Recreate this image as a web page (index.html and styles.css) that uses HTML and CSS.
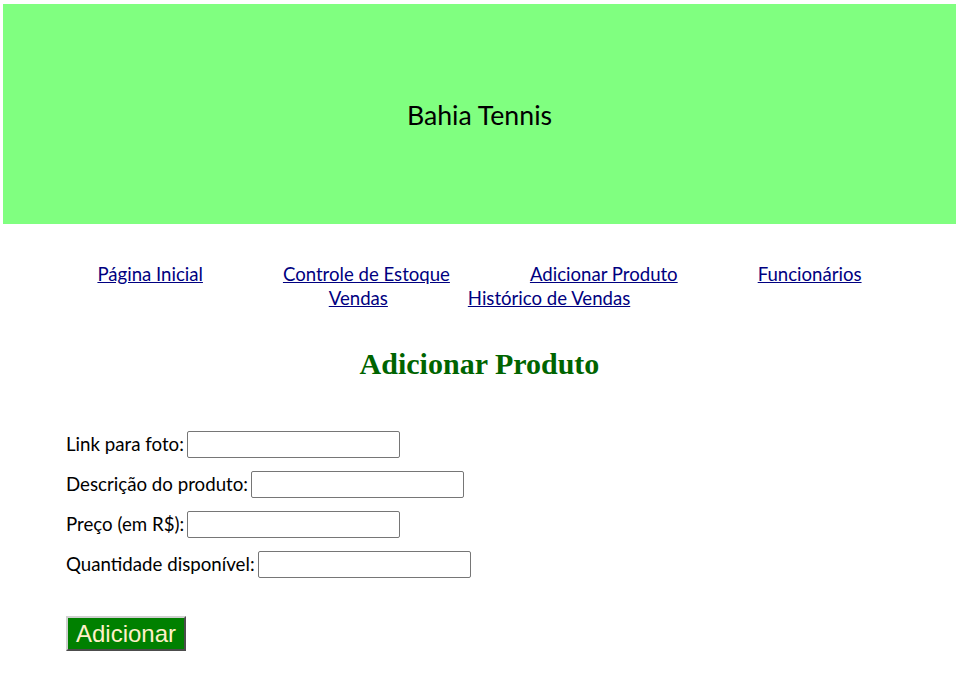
FILE: index.html
```html
<!DOCTYPE html>
<html lang="pt-BR">
<head>
<meta charset="utf-8">
<title>Bahia Tennis - Adicionar Produto</title>
<link rel="stylesheet" href="styles.css">
</head>
<body>
<header class="banner">
  <span class="brand">Bahia Tennis</span>
</header>
<nav class="menu">
  <div class="menu-row">
    <a href="#">Página Inicial</a>
    <a href="#">Controle de Estoque</a>
    <a href="#">Adicionar Produto</a>
    <a href="#">Funcionários</a>
  </div>
  <div class="menu-row">
    <a href="#">Vendas</a>
    <a href="#">Histórico de Vendas</a>
  </div>
</nav>
<h1 class="page-title">Adicionar Produto</h1>
<form class="product-form">
  <div class="field"><label for="foto">Link para foto:</label><input id="foto" type="text"></div>
  <div class="field"><label for="desc">Descrição do produto:</label><input id="desc" type="text"></div>
  <div class="field"><label for="preco">Preço (em R$):</label><input id="preco" type="text"></div>
  <div class="field"><label for="qtd">Quantidade disponível:</label><input id="qtd" type="text"></div>
  <div class="actions"><button type="button" class="submit">Adicionar</button></div>
</form>
</body>
</html>
```
FILE: styles.css
```css
html, body {
  background: #ffffff;
}
body {
  margin: 0;
  padding: 4px 1px 0 3px;
  font-family: Lato, "Open Sans", sans-serif;
  color: #000000;
}
.banner {
  background: #80ff80;
  height: 220px;
  display: flex;
  align-items: center;
  justify-content: center;
}
.brand {
  font-size: 26.7px;
  line-height: 32px;
  padding-top: 1px;
}
.menu {
  margin-top: 38px;
  display: flex;
  flex-direction: column;
  align-items: center;
}
.menu-row {
  display: flex;
  justify-content: center;
  line-height: 24px;
  font-size: 18.6px;
}
.menu-row a {
  color: #000080;
  margin: 0 40px;
}
.page-title {
  margin: 37px 0 0;
  text-align: center;
  font-family: "Liberation Serif", "Times New Roman", serif;
  font-weight: bold;
  font-size: 30px;
  line-height: 34px;
  color: #006400;
}
.product-form {
  margin: 50px 0 0;
  padding-left: 63px;
  display: flex;
  flex-direction: column;
  gap: 13px;
}
.field {
  display: flex;
  align-items: center;
  gap: 3px;
  height: 27px;
  font-size: 18.7px;
  line-height: 24px;
}
.field label {
  margin-top: -1px;
}
.field input {
  box-sizing: border-box;
  width: 213px;
  height: 27px;
  border: 1px solid #767676;
  border-radius: 2px;
  padding: 1px 2px;
  font-size: 16px;
  background: #ffffff;
}
.actions {
  margin-top: 25px;
}
.submit {
  font-family: "Liberation Sans", Arial, sans-serif;
  font-size: 24px;
  line-height: 27px;
  color: #fff0c8;
  background: #008000;
  border: 2px outset #d0d0d0;
  border-right-color: #a0a0a0;
  border-bottom-color: #a0a0a0;
  padding: 2px 8px;
  height: 35px;
  width: 120px;
}
```
